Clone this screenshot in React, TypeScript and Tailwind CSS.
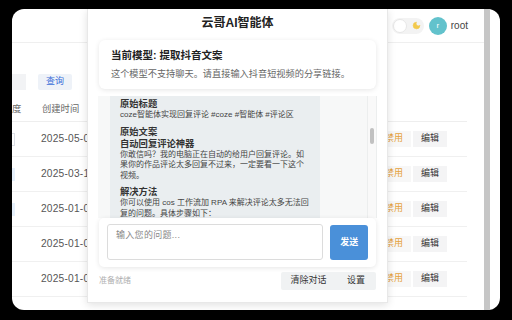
import { Moon } from 'lucide-react';

const rows = [
  { date: '2025-05-0', tag: 'box' },
  { date: '2025-03-1', tag: 'blue' },
  { date: '2025-01-0', tag: 'blue' },
  { date: '2025-01-0', tag: '' },
  { date: '2025-01-0', tag: '' },
];

function BackgroundPage() {
  return (
    <div className="flex-1 flex flex-col">
      {/* top bar */}
      <div className="h-[34px] border-b border-[#efefef] flex items-center justify-end pr-[16px] shrink-0">
        <div className="w-[32px] h-[16px] rounded-full bg-[#f3f3f3] flex items-center justify-between pl-[1px] pr-[3px]">
          <div className="w-[14px] h-[14px] rounded-full bg-white border border-[#e6e6e6]" />
          <Moon className="w-[9px] h-[9px] text-[#f2c94c] fill-[#f2c94c]" strokeWidth={1.5} />
        </div>
        <div className="ml-[5px] w-[18px] h-[18px] rounded-full bg-[#62c2cc] flex items-center justify-center text-white text-[8px]">
          r
        </div>
        <span className="ml-[4px] text-[10px] text-[#444]">root</span>
      </div>

      {/* filters */}
      <div className="mt-[31px] flex gap-[12px] h-[16px]">
        <div className="w-[14px] h-[16px] bg-[#f2f3f5]" />
        <div className="w-[34px] h-[16px] bg-[#eef2f8] rounded-[2px] flex items-center justify-center text-[9px] text-[#3b6fd8]">
          查询
        </div>
      </div>

      {/* table */}
      <div className="mt-[8px] w-[455px]">
        <div className="h-[24px] border-b border-[#eeeeee] flex items-center text-[9.3px] text-[#666]">
          <div className="w-[30px]">
            <span className="block">度</span>
          </div>
          <span>创建时间</span>
        </div>
        {rows.map((r, i) => (
          <div key={i} className="h-[35px] border-b border-[#f0f0f0] flex items-center">
            <div className="w-[29px] h-[13px]">
              {r.tag === 'box' && <div className="w-[3px] h-[13px] border-r border-y border-[#dcdfe6] bg-white" />}
              {r.tag === 'blue' && <div className="w-[3px] h-[13px] bg-[#e6f0fb]" />}
            </div>
            <span className="text-[10.2px] text-[#555] tracking-[0.2px]">{r.date}</span>
            <div className="ml-auto mr-[20px] flex gap-[2px]">
              <div className="w-[34px] h-[16px] bg-[#f7f7f7] flex items-center justify-center text-[9px] text-[#e6a23c]">禁用</div>
              <div className="w-[34px] h-[16px] bg-[#f4f4f5] flex items-center justify-center text-[9px] text-[#333]">编辑</div>
            </div>
          </div>
        ))}
      </div>
    </div>
  );
}

function ChatModal() {
  return (
    <div className="absolute left-[75px] top-0 w-[301px] h-[294px] bg-white border-x border-b border-[#e8e8e8] shadow-[0_2px_8px_rgba(0,0,0,0.12)] px-[10px] flex flex-col">
      <div className="pt-[6px] h-[31px] text-center text-[12px] font-bold text-[#222] leading-[16px]">云哥AI智能体</div>

      <div className="mx-[1px] h-[49px] rounded-[6px] bg-white shadow-[0_1px_5px_rgba(0,0,0,0.1)] px-[12px] pt-[9px]">
        <div className="text-[10.5px] font-bold text-[#222] leading-[12px]">当前模型: 提取抖音文案</div>
        <div className="mt-[7px] text-[9.2px] text-[#666] leading-[12px] whitespace-nowrap">
          这个模型不支持聊天。请直接输入抖音短视频的分享链接。
        </div>
      </div>

      <div className="mt-[7px] h-[122px] bg-[#f7f8f8] flex overflow-hidden">
        <div className="ml-[12px] w-[210px] bg-[#eaeef0] pl-[10px] pt-[2px] text-[#333] shrink-0">
          <div className="text-[9.3px] font-bold leading-[12px]">原始标题</div>
          <div className="text-[8px] leading-[10.5px] whitespace-nowrap text-[#444]">coze智能体实现回复评论 #coze #智能体 #评论区</div>
          <div className="mt-[5px] text-[9.3px] font-bold leading-[12px]">原始文案</div>
          <div className="text-[9.3px] font-bold leading-[12px]">自动回复评论神器</div>
          <div className="text-[8px] leading-[10.5px] whitespace-nowrap text-[#444]">
            <div>你敢信吗？我的电脑正在自动的给用户回复评论。如</div>
            <div>果你的作品评论太多回复不过来，一定要看一下这个</div>
            <div>视频。</div>
          </div>
          <div className="mt-[5px] text-[9.3px] font-bold leading-[12px]">解决方法</div>
          <div className="text-[8px] leading-[10.5px] whitespace-nowrap text-[#444]">
            <div>你可以使用 cos 工作流加 RPA 来解决评论太多无法回</div>
            <div>复的问题。具体步骤如下：</div>
          </div>
        </div>
        <div className="flex-1" />
        <div className="w-[10px] border-x border-[#eceeee] bg-[#f9f9f9] pt-[32px] flex justify-center">
          <div className="w-[4px] h-[16px] rounded-full bg-[#c1c1c1]" />
        </div>
      </div>

      <div className="mx-[1px] h-[49px] rounded-[5px] bg-white shadow-[0_1px_5px_rgba(0,0,0,0.1)] px-[8px] pt-[6px] flex gap-[7px]">
        <textarea
          className="w-[218px] h-[36px] resize-none border border-[#dcdcdc] rounded-[3px] px-[8px] pt-[4px] text-[9px] leading-[12px] outline-none placeholder:text-[#888] tracking-[0.3px]"
          placeholder="输入您的问题..."
        />
        <div className="mt-[1px] w-[38px] h-[35px] rounded-[3px] bg-[#4a90d9] flex items-center justify-center text-white text-[9px] font-bold">
          发送
        </div>
      </div>

      <div className="mt-[5px] flex items-center px-[1px]">
        <span className="text-[8px] text-[#b0b0b0]">准备就绪</span>
        <div className="ml-auto flex h-[18px] bg-[#f0f2f3] rounded-[2px] text-[9px] text-[#333]">
          <div className="w-[55px] flex items-center justify-center">清除对话</div>
          <div className="w-[40px] flex items-center justify-center">设置</div>
        </div>
      </div>
    </div>
  );
}

export default function App() {
  return (
    <div className="w-[512px] h-[320px] bg-black pl-[12px] pt-[9px] font-['Liberation_Sans','Noto_Sans_CJK_SC',sans-serif]">
      <div className="w-[488px] h-[301px] rounded-[12px] bg-white overflow-hidden flex">
        <div className="flex-1 relative flex">
          <BackgroundPage />
          <ChatModal />
        </div>
        <div className="w-[6px] bg-[#c6c6c6]" />
        <div className="w-[10px]" />
      </div>
    </div>
  );
}
